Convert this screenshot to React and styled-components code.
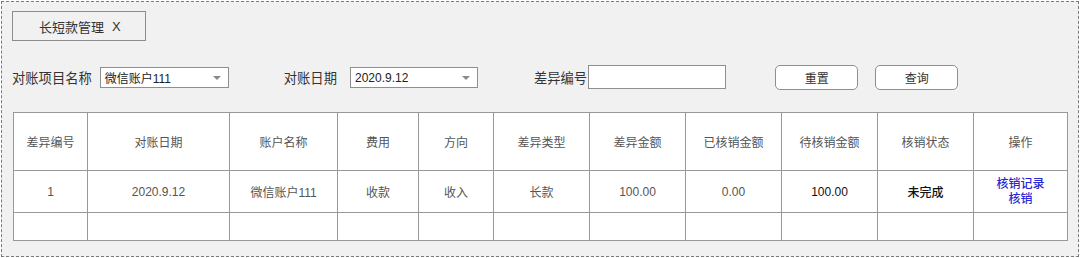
import React from 'react';
import styled, { createGlobalStyle } from 'styled-components';

const GlobalStyle = createGlobalStyle`
  html, body {
    margin: 0;
    padding: 0;
    background: #ffffff;
  }
  body {
    font-family: "Liberation Sans", "Noto Sans CJK SC", sans-serif;
    color: #333;
  }
`;

const Frame = styled.div`
  box-sizing: border-box;
  margin: 1px 0 0 1px;
  width: 1078px;
  height: 256px;
  border: 1px dashed #7a7a7a;
  background: #f1f1f1;
  padding: 9px 0 0 10px;
`;

const Tab = styled.div`
  box-sizing: border-box;
  width: 134px;
  height: 30px;
  border: 1px solid #8c8c8c;
  display: flex;
  align-items: center;
  padding-left: 26px;
  font-size: 13px;
  color: #333;
  gap: 8px;
`;

const FilterRow = styled.div`
  display: flex;
  align-items: center;
  height: 26px;
  margin-top: 23px;
`;

const Label = styled.span`
  font-size: 13.3px;
  color: #333;
  margin-left: ${p => p.$gap || 0}px;
  white-space: nowrap;
`;

const Select = styled.div`
  box-sizing: border-box;
  position: relative;
  width: ${p => p.$width}px;
  height: 21px;
  margin-left: ${p => p.$gap || 0}px;
  border: 1px solid #8f8f8f;
  background: #fff;
  font-size: 12px;
  color: #222;
  display: flex;
  align-items: center;
  padding: 1px 0 0 4px;
`;

const Caret = styled.span`
  position: absolute;
  right: 7px;
  top: 8px;
  width: 0;
  height: 0;
  border-left: 4px solid transparent;
  border-right: 4px solid transparent;
  border-top: 4px solid #8a8a8a;
`;

const Input = styled.div`
  box-sizing: border-box;
  width: 138px;
  height: 24px;
  margin-left: ${p => p.$gap || 0}px;
  border: 1px solid #8f8f8f;
  background: #fff;
`;

const Button = styled.div`
  box-sizing: border-box;
  width: 83px;
  height: 25px;
  margin-left: ${p => p.$gap || 0}px;
  border: 1px solid #8f8f8f;
  border-radius: 5px;
  background: #fff;
  display: flex;
  align-items: center;
  justify-content: center;
  font-size: 12px;
  color: #333;
`;

const Table = styled.table`
  margin: 22px 0 0 1px;
  width: 1054px;
  border-collapse: collapse;
  table-layout: fixed;
  background: #fff;
  font-size: 12px;
`;

const Row = styled.tr`
  height: ${p => p.$height}px;
`;

const Th = styled.th`
  border: 1px solid #989898;
  padding: 0;
  font-weight: normal;
  color: #555;
  text-align: center;
  vertical-align: middle;
`;

const Td = styled.td`
  border: 1px solid #989898;
  padding: 0;
  text-align: center;
  vertical-align: middle;
  color: ${p => (p.$strong ? '#111' : '#555')};
  font-weight: ${p => (p.$bold ? 500 : 'normal')};
`;

const Links = styled.div`
  display: flex;
  flex-direction: column;
  align-items: center;
  line-height: 15px;
  color: #2828d2;
  font-weight: 500;
`;

const columns = [
  { title: '差异编号', width: 74 },
  { title: '对账日期', width: 142 },
  { title: '账户名称', width: 108 },
  { title: '费用', width: 81 },
  { title: '方向', width: 75 },
  { title: '差异类型', width: 96 },
  { title: '差异金额', width: 96 },
  { title: '已核销金额', width: 96 },
  { title: '待核销金额', width: 96 },
  { title: '核销状态', width: 96 },
  { title: '操作', width: 94 },
];

const App = () => (
  <>
    <GlobalStyle />
    <Frame>
      <Tab>
        <span>长短款管理</span>
        <span>X</span>
      </Tab>

      <FilterRow>
        <Label>对账项目名称</Label>
        <Select $width={129} $gap={8}>
          微信账户111
          <Caret />
        </Select>
        <Label $gap={55}>对账日期</Label>
        <Select $width={128} $gap={13}>
          2020.9.12
          <Caret />
        </Select>
        <Label $gap={56}>差异编号</Label>
        <Input $gap={1} />
        <Button $gap={49}>重置</Button>
        <Button $gap={17}>查询</Button>
      </FilterRow>

      <Table>
        <colgroup>
          {columns.map(c => (
            <col key={c.title} style={{ width: c.width }} />
          ))}
        </colgroup>
        <thead>
          <Row $height={58}>
            {columns.map(c => (
              <Th key={c.title}>{c.title}</Th>
            ))}
          </Row>
        </thead>
        <tbody>
          <Row $height={42}>
            <Td>1</Td>
            <Td>2020.9.12</Td>
            <Td>微信账户111</Td>
            <Td>收款</Td>
            <Td>收入</Td>
            <Td>长款</Td>
            <Td>100.00</Td>
            <Td>0.00</Td>
            <Td $strong>100.00</Td>
            <Td $strong $bold>未完成</Td>
            <Td>
              <Links>
                <span>核销记录</span>
                <span>核销</span>
              </Links>
            </Td>
          </Row>
          <Row $height={28}>
            {columns.map(c => (
              <Td key={c.title} />
            ))}
          </Row>
        </tbody>
      </Table>
    </Frame>
  </>
);

export default App;
